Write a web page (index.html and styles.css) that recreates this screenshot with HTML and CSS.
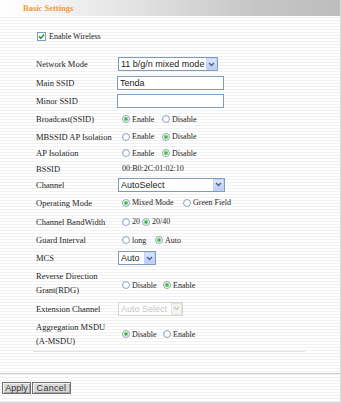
FILE: index.html
```html
<!DOCTYPE html>
<html>
<head>
<meta charset="utf-8">
<link rel="stylesheet" href="styles.css">
</head>
<body>
<div class="page">
  <div class="head"><span class="title">Basic Settings</span></div>
  <div class="form">
    <label class="check"><span class="cbox"><svg width="7" height="7" viewBox="0 0 7 7"><path d="M1 3.3 L2.8 5.2 L6 1.4" fill="none" stroke="#21a121" stroke-width="1.6"/></svg></span>Enable Wireless</label>
    <div class="rows">
      <div class="row h18"><span class="lbl">Network Mode</span><span class="sel w100"><select><option>11 b/g/n mixed mode</option></select><span class="arr"><svg width="7" height="5" viewBox="0 0 7 5"><path d="M1 1 L3.5 3.5 L6 1" fill="none" stroke="#4d6185" stroke-width="1.4"/></svg></span></span></div>
      <div class="row h19"><span class="lbl">Main SSID</span><input class="txt" type="text" value="Tenda"></div>
      <div class="row h18"><span class="lbl">Minor SSID</span><input class="txt" type="text" value=""></div>
      <div class="row h18"><span class="lbl">Broadcast(SSID)</span><span class="opts"><label class="opt o-en"><input class="rd" type="radio" name="b" checked>Enable</label><label class="opt"><input class="rd" type="radio" name="b">Disable</label></span></div>
      <div class="row h17"><span class="lbl">MBSSID AP Isolation</span><span class="opts"><label class="opt o-en"><input class="rd" type="radio" name="m">Enable</label><label class="opt"><input class="rd" type="radio" name="m" checked>Disable</label></span></div>
      <div class="row h16"><span class="lbl">AP Isolation</span><span class="opts"><label class="opt o-en"><input class="rd" type="radio" name="a">Enable</label><label class="opt"><input class="rd" type="radio" name="a" checked>Disable</label></span></div>
      <div class="row h15"><span class="lbl">BSSID</span><span class="val">00:B0:2C:01:02:10</span></div>
      <div class="row h17"><span class="lbl">Channel</span><span class="sel w107"><select><option>AutoSelect</option></select><span class="arr"><svg width="7" height="5" viewBox="0 0 7 5"><path d="M1 1 L3.5 3.5 L6 1" fill="none" stroke="#4d6185" stroke-width="1.4"/></svg></span></span></div>
      <div class="row h19"><span class="lbl">Operating Mode</span><span class="opts"><label class="opt o-mm"><input class="rd" type="radio" name="o" checked>Mixed Mode</label><label class="opt"><input class="rd" type="radio" name="o">Green Field</label></span></div>
      <div class="row h19"><span class="lbl">Channel BandWidth</span><span class="opts"><label class="opt o-20"><input class="rd" type="radio" name="w">20</label><label class="opt"><input class="rd" type="radio" name="w" checked>20/40</label></span></div>
      <div class="row h18"><span class="lbl">Guard Interval</span><span class="opts"><label class="opt o-lg"><input class="rd" type="radio" name="g">long</label><label class="opt"><input class="rd" type="radio" name="g" checked>Auto</label></span></div>
      <div class="row h18"><span class="lbl">MCS</span><span class="sel w38"><select><option>Auto</option></select><span class="arr"><svg width="7" height="5" viewBox="0 0 7 5"><path d="M1 1 L3.5 3.5 L6 1" fill="none" stroke="#4d6185" stroke-width="1.4"/></svg></span></span></div>
      <div class="row h32"><span class="lbl two">Reverse Direction<br>Grant(RDG)</span><span class="opts low"><label class="opt o-dis"><input class="rd" type="radio" name="r">Disable</label><label class="opt"><input class="rd" type="radio" name="r" checked>Enable</label></span></div>
      <div class="row h19"><span class="lbl">Extension Channel</span><span class="sel w65 dis"><select disabled><option>Auto Select</option></select><span class="arr"><svg width="7" height="5" viewBox="0 0 7 5"><path d="M1 1 L3.5 3.5 L6 1" fill="none" stroke="#c9c9c9" stroke-width="1.4"/></svg></span></span></div>
      <div class="row h32"><span class="lbl two">Aggregation MSDU<br>(A-MSDU)</span><span class="opts"><label class="opt o-dis"><input class="rd" type="radio" name="x" checked>Disable</label><label class="opt"><input class="rd" type="radio" name="x">Enable</label></span></div>
    </div>
    <div class="sep"></div>
  </div>
  <div class="bar"><button class="btn b-apply">Apply</button><button class="btn b-cancel">Cancel</button></div>
</div>
</body>
</html>
```
FILE: styles.css
```css
html, body {
  margin: 0;
  padding: 0;
}
body {
  width: 341px;
  height: 403px;
  overflow: hidden;
  background: repeating-linear-gradient(to bottom, #ffffff 0, #ffffff 2px, #f1f1f1 2px, #f1f1f1 3px);
  font-family: "Liberation Serif", "Times New Roman", serif;
  color: #1e1e1e;
}
.page {
  width: 340px;
  height: 403px;
  border-right: 1px solid #dcdcdc;
  display: flex;
  flex-direction: column;
}
.head {
  height: 16px;
  background: linear-gradient(to right, #ffffff 0%, #e2e2e2 40%, #c6c6c6 75%, #bdbdbd 100%);
  display: flex;
  align-items: center;
  padding-left: 23px;
}
.title {
  color: #f29a3c;
  font-weight: bold;
  font-size: 8.5px;
}
.form {
  padding-left: 36px;
}
.check {
  margin-top: 11px;
  height: 18px;
  display: flex;
  align-items: center;
  font-size: 8px;
  margin-left: 1px;
}
.cbox {
  width: 7px;
  height: 7px;
  border: 1px solid #7f9db9;
  background: #fff;
  display: flex;
  align-items: center;
  justify-content: center;
  margin-right: 3px;
}
.cbox svg { display: block; }
.rows {
  margin-top: 10px;
  display: flex;
  flex-direction: column;
}
.row {
  display: grid;
  grid-template-columns: 82px auto;
  align-items: center;
}
.h15 { height: 15px; }
.h16 { height: 16px; }
.h17 { height: 17px; }
.h18 { height: 18px; }
.h19 { height: 19px; }
.h32 { height: 32px; }
.lbl {
  font-size: 8.5px;
  white-space: nowrap;
}
.lbl.two { line-height: 14px; }
.val {
  font-size: 8px;
  padding-left: 4px;
}
.sel {
  position: relative;
  display: block;
  height: 14px;
  justify-self: start;
}
.w100 { width: 100px; }
.w107 { width: 107px; }
.w38 { width: 38px; }
.w65 { width: 65px; }
.sel select {
  appearance: none;
  -webkit-appearance: none;
  width: 100%;
  height: 14px;
  margin: 0;
  border: 1px solid #7f9db9;
  border-radius: 0;
  background: #fff;
  font-family: "Liberation Sans", Arial, sans-serif;
  font-size: 9px;
  color: #222;
  padding: 0 0 0 2px;
  line-height: 12px;
  display: block;
  box-sizing: border-box;
}
.sel .arr {
  position: absolute;
  top: 1px;
  right: 1px;
  width: 11px;
  height: 12px;
  box-sizing: border-box;
  background: linear-gradient(to bottom, #dce7fc, #b9ccf5);
  border: 1px solid #c3d3fd;
  display: flex;
  align-items: center;
  justify-content: center;
}
.sel.dis select {
  border-color: #c9c7ba;
  color: #b3b3b3;
  background: #fff;
}
.sel.dis .arr {
  background: #f4f4f0;
  border-color: #e6e6e0;
}
.txt {
  justify-self: start;
  margin: 0 0 0 -1px;
  width: 107px;
  height: 14px;
  box-sizing: border-box;
  border: 1px solid #7f9db9;
  border-radius: 0;
  padding: 0 2px;
  font-family: "Liberation Sans", Arial, sans-serif;
  font-size: 9px;
  color: #222;
  background: #fff;
  outline: none;
}
.opts {
  display: flex;
  align-items: center;
}
.opts.low { margin-top: 4px; }
.opt {
  display: flex;
  align-items: center;
  font-size: 8px;
  white-space: nowrap;
}
.o-en { width: 40px; }
.o-mm { width: 61px; }
.o-20 { width: 20px; }
.o-lg { width: 33px; }
.o-dis { width: 41px; }
.rd {
  appearance: none;
  -webkit-appearance: none;
  width: 8px;
  height: 8px;
  margin: 0 2px 0 4px;
  border: 1px solid #8ea6c0;
  border-radius: 50%;
  box-sizing: border-box;
  background: radial-gradient(circle at 60% 60%, #ffffff 0, #ffffff 40%, #e1e6ec 100%);
  flex: none;
}
.rd:checked {
  background: radial-gradient(circle at 50% 50%, #2fb52f 0, #44c044 1.2px, #bfe8bf 2.1px, #ffffff 2.7px, #e6ebf0 100%);
}
.sep {
  margin-top: 1px;
  margin-left: -3px;
  width: 272px;
  height: 0;
  border-top: 1px solid #e2e2e2;
}
.bar {
  margin-top: 21px;
  border-top: 1px solid #c9c9c9;
  border-bottom: 1px solid #d6d6d6;
  display: flex;
  align-items: flex-start;
  padding: 8px 0 0 2px;
  box-sizing: border-box;
  height: 30px;
  gap: 1px;
}
.btn {
  height: 12px;
  margin: 0;
  padding: 0;
  box-sizing: border-box;
  border: 1px solid #6e6e6e;
  box-shadow: inset 1px 1px 0 #f4f4f4, inset -1px -1px 0 #a8a8a8;
  background: #d9d9d9;
  font-family: "Liberation Sans", Arial, sans-serif;
  font-size: 9px;
  line-height: 10px;
  color: #333;
}
.b-apply { width: 29px; }
.b-cancel { width: 39px; letter-spacing: 0.3px; }
```
